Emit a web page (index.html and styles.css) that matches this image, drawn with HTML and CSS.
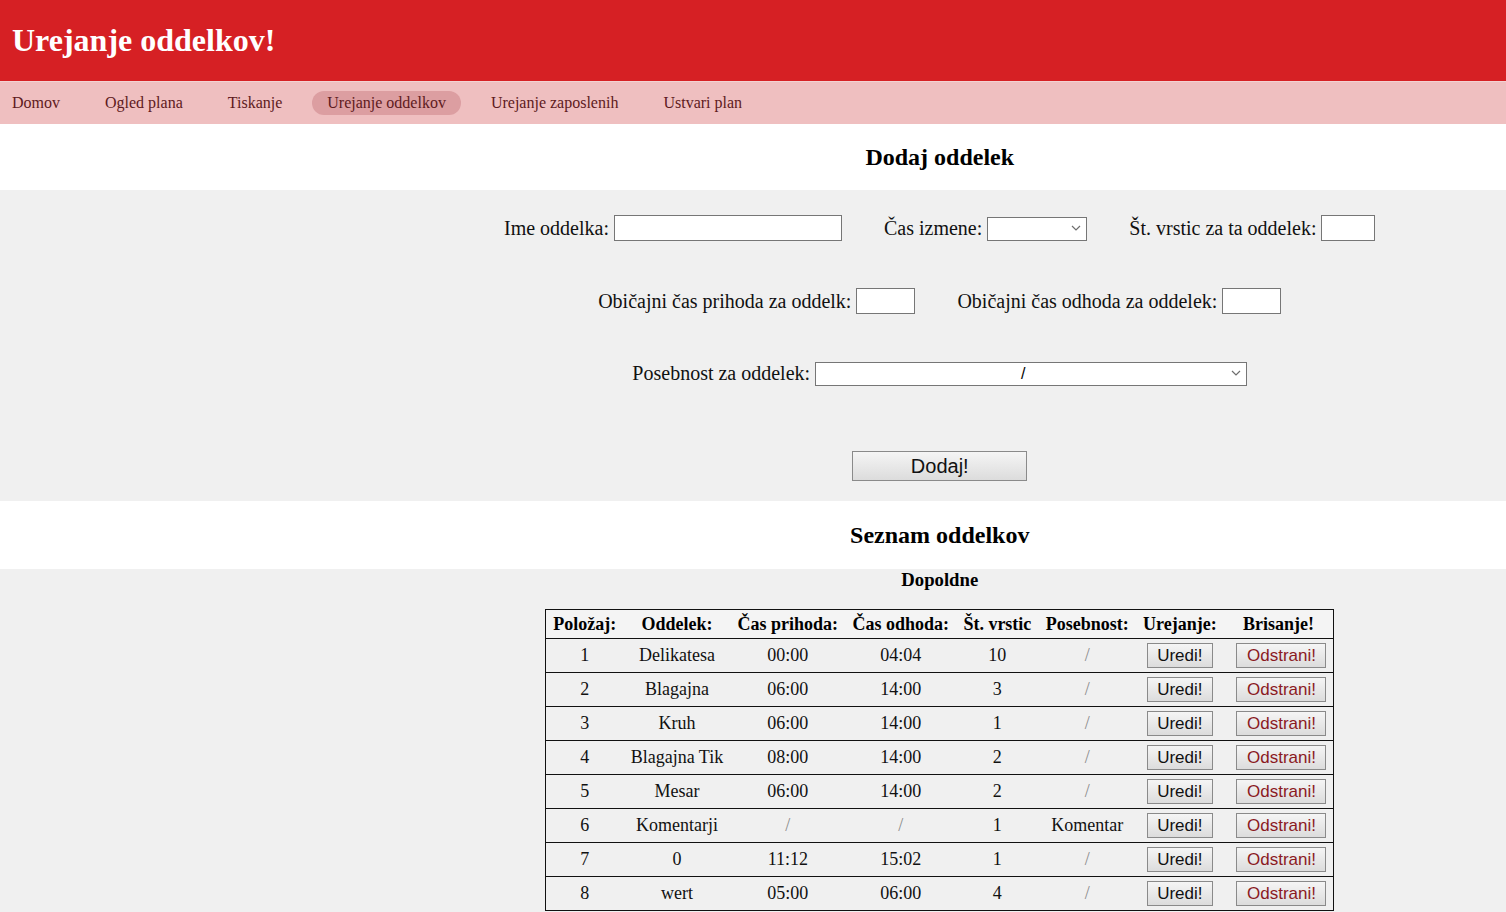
FILE: index.html
```html
<!DOCTYPE html>
<html lang="sl">
<head>
<meta charset="utf-8">
<title>Urejanje oddelkov</title>
<link rel="stylesheet" href="styles.css">
</head>
<body>
<header class="top">
  <h1 class="title">Urejanje oddelkov!</h1>
</header>
<nav class="menu">
  <ul class="menu-list">
    <li><a class="menu-link" href="#">Domov</a></li>
    <li><a class="menu-link" href="#">Ogled plana</a></li>
    <li><a class="menu-link" href="#">Tiskanje</a></li>
    <li><a class="menu-link active" href="#">Urejanje oddelkov</a></li>
    <li><a class="menu-link" href="#">Urejanje zaposlenih</a></li>
    <li><a class="menu-link" href="#">Ustvari plan</a></li>
  </ul>
</nav>

<div class="band"><h2 class="band-title">Dodaj oddelek</h2></div>

<section class="form">
  <div class="row row-1">
    <label class="field">Ime oddelka: <input class="inp inp-name" type="text"></label>
    <label class="field">Čas izmene: <span class="sel sel-shift"><select class="sel-box"><option></option></select><svg class="chev" width="10" height="6" viewBox="0 0 10 6"><path d="M1 1 L5 5 L9 1" fill="none" stroke="#6e6e6e" stroke-width="1.2"/></svg></span></label>
    <label class="field">Št. vrstic za ta oddelek: <input class="inp inp-small" type="text"></label>
  </div>
  <div class="row row-2">
    <label class="field">Običajni čas prihoda za oddelk: <input class="inp inp-time" type="text"></label>
    <label class="field">Običajni čas odhoda za oddelek: <input class="inp inp-time" type="text"></label>
  </div>
  <div class="row row-3">
    <label class="field">Posebnost za oddelek: <span class="sel sel-wide"><select class="sel-box sel-center"><option>/</option></select><svg class="chev" width="10" height="6" viewBox="0 0 10 6"><path d="M1 1 L5 5 L9 1" fill="none" stroke="#6e6e6e" stroke-width="1.2"/></svg></span></label>
  </div>
  <div class="row row-4">
    <button class="btn btn-add" type="button">Dodaj!</button>
  </div>
</section>

<div class="band band-2"><h2 class="band-title">Seznam oddelkov</h2></div>

<section class="list">
  <h3 class="list-title">Dopoldne</h3>
  <table class="tbl">
    <thead>
      <tr class="head-row">
        <th>Položaj:</th><th>Oddelek:</th><th>Čas prihoda:</th><th>Čas odhoda:</th><th>Št. vrstic</th><th>Posebnost:</th><th>Urejanje:</th><th>Brisanje!</th>
      </tr>
    </thead>
    <tbody>
      <tr><td>1</td><td>Delikatesa</td><td>00:00</td><td>04:04</td><td>10</td><td class="muted">/</td><td><button class="btn btn-row" type="button">Uredi!</button></td><td><button class="btn btn-row btn-del" type="button">Odstrani!</button></td></tr>
      <tr><td>2</td><td>Blagajna</td><td>06:00</td><td>14:00</td><td>3</td><td class="muted">/</td><td><button class="btn btn-row" type="button">Uredi!</button></td><td><button class="btn btn-row btn-del" type="button">Odstrani!</button></td></tr>
      <tr><td>3</td><td>Kruh</td><td>06:00</td><td>14:00</td><td>1</td><td class="muted">/</td><td><button class="btn btn-row" type="button">Uredi!</button></td><td><button class="btn btn-row btn-del" type="button">Odstrani!</button></td></tr>
      <tr><td>4</td><td>Blagajna Tik</td><td>08:00</td><td>14:00</td><td>2</td><td class="muted">/</td><td><button class="btn btn-row" type="button">Uredi!</button></td><td><button class="btn btn-row btn-del" type="button">Odstrani!</button></td></tr>
      <tr><td>5</td><td>Mesar</td><td>06:00</td><td>14:00</td><td>2</td><td class="muted">/</td><td><button class="btn btn-row" type="button">Uredi!</button></td><td><button class="btn btn-row btn-del" type="button">Odstrani!</button></td></tr>
      <tr><td>6</td><td>Komentarji</td><td class="muted">/</td><td class="muted">/</td><td>1</td><td>Komentar</td><td><button class="btn btn-row" type="button">Uredi!</button></td><td><button class="btn btn-row btn-del" type="button">Odstrani!</button></td></tr>
      <tr><td>7</td><td>0</td><td>11:12</td><td>15:02</td><td>1</td><td class="muted">/</td><td><button class="btn btn-row" type="button">Uredi!</button></td><td><button class="btn btn-row btn-del" type="button">Odstrani!</button></td></tr>
      <tr><td>8</td><td>wert</td><td>05:00</td><td>06:00</td><td>4</td><td class="muted">/</td><td><button class="btn btn-row" type="button">Uredi!</button></td><td><button class="btn btn-row btn-del" type="button">Odstrani!</button></td></tr>
    </tbody>
  </table>
</section>
</body>
</html>
```

FILE: styles.css
```css
html {
  overflow: hidden;
}

body {
  margin: 0;
  background: #f0f0f0;
  font-family: "Liberation Serif", "Times New Roman", serif;
  color: #111;
}

.top {
  background: #d62024;
  height: 81px;
  border-bottom: 1px solid #f3d2d2;
  display: flex;
  align-items: center;
  padding-left: 12px;
  box-sizing: content-box;
}

.title {
  margin: 0;
  font-size: 32px;
  font-weight: bold;
  color: #fff;
  line-height: 37px;
  padding-bottom: 1px;
}

.menu {
  background: #efbfc0;
  height: 42px;
  display: flex;
  align-items: center;
}

.menu-list {
  list-style: none;
  margin: 0 0 0 -3px;
  padding: 0;
  display: flex;
  gap: 15px;
}

.menu-link {
  display: block;
  padding: 3px 15px;
  height: 18px;
  line-height: 18px;
  font-size: 16px;
  color: #5e1a20;
  text-decoration: none;
  border-radius: 12px;
}

.menu-link.active {
  background: #dc9ea1;
}

.band {
  background: #fff;
  height: 66px;
  display: flex;
  align-items: center;
  justify-content: center;
  padding-left: 24.8%;
}

.band-2 {
  height: 68px;
}

.band-title {
  margin: 0;
  font-size: 24px;
  font-weight: bold;
  line-height: 28px;
  color: #000;
}

.form {
  padding: 25px 0 20px 24.8%;
  display: flex;
  flex-direction: column;
  align-items: center;
}

.row {
  display: flex;
  justify-content: center;
  align-items: center;
  gap: 42px;
  height: 26px;
}

.row-2 {
  margin-top: 47px;
}

.row-3 {
  margin-top: 46px;
}

.row-4 {
  margin-top: 65px;
  height: 30px;
}

.field {
  font-size: 20px;
  display: flex;
  align-items: center;
  white-space: pre;
  color: #111;
}

.inp {
  box-sizing: border-box;
  height: 26px;
  border: 1px solid #767676;
  background: #fff;
  margin: 0;
  padding: 0 3px;
  font-family: "Liberation Sans", Arial, sans-serif;
  font-size: 14px;
}

.inp-name {
  width: 228px;
}

.inp-small {
  width: 54px;
}

.inp-time {
  width: 59px;
}

.sel {
  position: relative;
  display: block;
  height: 24px;
}

.sel-shift {
  width: 100px;
}

.sel-wide {
  width: 432px;
}

.sel-box {
  -webkit-appearance: none;
  appearance: none;
  box-sizing: border-box;
  width: 100%;
  height: 24px;
  margin: 0;
  border: 1px solid #767676;
  border-radius: 0;
  background: #fff;
  font-family: "Liberation Sans", Arial, sans-serif;
  font-size: 16px;
  color: #000;
  padding: 0 20px 0 4px;
}

.sel-center {
  text-align: center;
  text-align-last: center;
}

.chev {
  position: absolute;
  right: 6px;
  top: 9px;
  pointer-events: none;
}

.btn {
  box-sizing: border-box;
  margin: 0;
  border: 1px solid #8a8a8a;
  border-radius: 0;
  background: linear-gradient(#f5f5f5, #dcdcdc);
  font-family: "Liberation Sans", Arial, sans-serif;
  color: #111;
}

.btn-add {
  width: 175px;
  height: 30px;
  font-size: 20px;
  padding: 0;
}

.list {
  padding-left: 24.8%;
  padding-bottom: 40px;
}

.list-title {
  margin: 0 0 18px;
  text-align: center;
  font-size: 18.72px;
  line-height: 22px;
  color: #000;
}

.tbl {
  width: 789px;
  margin: 0 auto;
  border-collapse: collapse;
  border: 1px solid #111;
  font-size: 18px;
  background: #f0f0f0;
}

.tbl th,
.tbl td {
  padding: 0 7px;
  text-align: center;
  white-space: nowrap;
  color: #111;
}

.tbl th {
  height: 28px;
  font-weight: bold;
  background: #f4f4f4;
  color: #000;
}

.tbl tbody tr {
  border-top: 1px solid #111;
}

.tbl td {
  height: 33px;
}

.tbl td.muted {
  color: #8a8a8a;
}

.btn-row {
  height: 25px;
  font-size: 17px;
  padding: 0 9px;
  line-height: 21px;
  vertical-align: middle;
}

.btn-del {
  color: #8b1a1f;
  margin-left: 5px;
  padding: 0 9px 0 10px;
}
```
